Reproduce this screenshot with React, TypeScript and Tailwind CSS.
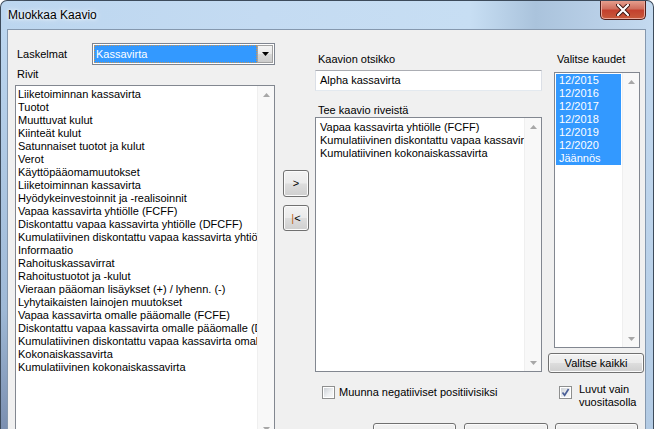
import React from "react";

const rows = [
  "Liiketoiminnan kassavirta",
  "Tuotot",
  "Muuttuvat kulut",
  "Kiinteät kulut",
  "Satunnaiset tuotot ja kulut",
  "Verot",
  "Käyttöpääomamuutokset",
  "Liiketoiminnan kassavirta",
  "Hyödykeinvestoinnit ja -realisoinnit",
  "Vapaa kassavirta yhtiölle (FCFF)",
  "Diskontattu vapaa kassavirta yhtiölle (DFCFF)",
  "Kumulatiivinen diskontattu vapaa kassavirta yhtiölle (DFCFF)",
  "Informaatio",
  "Rahoituskassavirrat",
  "Rahoitustuotot ja -kulut",
  "Vieraan pääoman lisäykset (+) / lyhenn. (-)",
  "Lyhytaikaisten lainojen muutokset",
  "Vapaa kassavirta omalle pääomalle (FCFE)",
  "Diskontattu vapaa kassavirta omalle pääomalle (DFCFE)",
  "Kumulatiivinen diskontattu vapaa kassavirta omalle pääomalle (DFCFE)",
  "Kokonaiskassavirta",
  "Kumulatiivinen kokonaiskassavirta",
];

const chartRows = [
  "Vapaa kassavirta yhtiölle (FCFF)",
  "Kumulatiivinen diskontattu vapaa kassavirta yhtiölle (DFCFF)",
  "Kumulatiivinen kokonaiskassavirta",
];

const periods = ["12/2015", "12/2016", "12/2017", "12/2018", "12/2019", "12/2020", "Jäännös"];

function VScroll() {
  return (
    <div className="w-[17px] self-stretch bg-[#f8f8f8] border-l border-[#efefef] flex flex-col justify-between shrink-0">
      <div className="h-[17px] flex items-center justify-center">
        <svg width="7" height="4" viewBox="0 0 7 4">
          <path d="M0 4 L3.5 0 L7 4 Z" fill="#a7a7a7" />
        </svg>
      </div>
      <div className="h-[17px] flex items-center justify-center">
        <svg width="7" height="4" viewBox="0 0 7 4">
          <path d="M0 0 L3.5 4 L7 0 Z" fill="#a7a7a7" />
        </svg>
      </div>
    </div>
  );
}

const btn =
  "border border-[#707070] rounded-[3px] bg-[linear-gradient(180deg,#f2f2f2_0%,#ebebeb_48%,#dddddd_52%,#cfcfcf_100%)] shadow-[inset_0_0_0_1px_#fbfbfb] flex items-center justify-center text-black";

function CheckBox({ checked }: { checked?: boolean }) {
  return (
    <div className="w-[13px] h-[13px] border border-[#8e8f8f] bg-white p-[1px] shrink-0">
      <div className="w-full h-full bg-[linear-gradient(135deg,#cdd1d6_0%,#eef0f2_60%,#f7f7f7_100%)] relative">
        {checked && (
          <svg className="absolute left-0 top-0" width="9" height="9" viewBox="0 0 9 9">
            <path d="M1.5 4.5 L3.6 7.2 L7.6 1" stroke="#4a5f97" strokeWidth="1.7" fill="none" />
          </svg>
        )}
      </div>
    </div>
  );
}

export default function App() {
  return (
    <div className="w-[654px] h-[429px] overflow-hidden flex flex-col font-['Liberation_Sans',Arial,sans-serif] text-[11px] text-black bg-[linear-gradient(90deg,#bcd6ef_0%,#c4dbf2_40%,#c7def3_72%,#aac3dc_82%,#b6cde5_90%,#c4daf0_100%)] rounded-t-[7px] border border-b-0 border-[#3d4b5b]">
      {/* title bar */}
      <div className="h-[28px] flex items-start shrink-0">
        <div className="pl-[7px] pt-[7px] text-[12px] leading-[15px] [text-shadow:0_0_6px_#ffffff,0_0_3px_#ffffff]">
          Muokkaa Kaavio
        </div>
        <div className="ml-auto mr-[7px] w-[46px] h-[20px] -mt-px rounded-b-[5px] border border-t-0 border-[#4f1e1a] bg-[linear-gradient(180deg,#e8a493_0%,#d0705f_45%,#c4412e_55%,#c85a3c_100%)] shadow-[inset_0_0_0_1px_#eaa79a] flex items-center justify-center">
          <svg width="14" height="12" viewBox="0 0 14 12">
            <path d="M2 1 L12 11 M12 1 L2 11" stroke="#3b1410" strokeWidth="4" strokeLinecap="round" />
            <path d="M2 1 L12 11 M12 1 L2 11" stroke="#ffffff" strokeWidth="2.2" strokeLinecap="round" />
          </svg>
        </div>
      </div>

      {/* body */}
      <div className="flex flex-1 min-h-0">
        <div className="w-[6px] shrink-0 bg-[linear-gradient(180deg,#bcd6ef_0%,#9fb9d6_70%,#7b8fb0_100%)]" />
        <div className="flex-1 bg-[#f0f0f0] border border-b-0 border-[#8598ae] flex pl-[7px] min-h-0">
          {/* left column */}
          <div className="w-[260px] flex flex-col shrink-0">
            <div className="mt-[13px] h-[22px] flex items-center">
              <span className="pl-[2px] leading-[14px]">Laskelmat</span>
              <div className="ml-auto w-[183px] h-[22px] border border-[#7f8590] bg-white flex p-[1px]">
                <div className="flex-1 bg-[#3399ff] text-white leading-[16px] pl-[1px] border border-dotted border-[#c79356]">
                  Kassavirta
                </div>
                <div className="w-[16px] border border-[#a2a2a2] bg-[linear-gradient(180deg,#f4f4f4_0%,#e8e8e8_50%,#d8d8d8_51%,#cccccc_100%)] flex items-center justify-center">
                  <svg width="7" height="4" viewBox="0 0 7 4">
                    <path d="M0 0 L3.5 4 L7 0 Z" fill="#000" />
                  </svg>
                </div>
              </div>
            </div>
            <div className="mt-[2px] leading-[14px] pl-[2px]">Rivit</div>
            <div className="mt-[4px] h-[353px] border border-[#828790] bg-white flex shrink-0">
              <div className="flex-1 overflow-hidden pl-[2px] pt-[2px] leading-[13px] whitespace-nowrap">
                {rows.map((r, i) => (
                  <div key={i}>{r}</div>
                ))}
              </div>
              <VScroll />
            </div>
          </div>

          {/* move buttons */}
          <div className="ml-[8px] w-[26px] flex flex-col shrink-0">
            <div className={`mt-[140px] h-[27px] ${btn} border-[#3c7fb1] shadow-[inset_0_0_0_1px_#a6dcf7]`}>&gt;</div>
            <div className={`mt-[8px] h-[26px] ${btn}`}>
              <span className="text-[#c0661c]">|</span>&lt;
            </div>
          </div>

          {/* right region */}
          <div className="ml-[6px] w-[329px] flex flex-col shrink-0">
            <div className="flex">
              <div className="w-[227px] flex flex-col">
                <div className="mt-[22px] leading-[14px] pl-[3px]">Kaavion otsikko</div>
                <div className="mt-[4px] h-[21px] border border-[#abadb3] border-b-[#e3e9ef] border-x-[#dbdfe6] bg-white pl-[4px] leading-[19px]">
                  Alpha kassavirta
                </div>
                <div className="mt-[12px] leading-[14px] pl-[3px]">Tee kaavio riveistä</div>
                <div className="h-[255px] border border-[#828790] bg-white flex">
                  <div className="flex-1 overflow-hidden pl-[4px] pt-[3px] leading-[13px] whitespace-nowrap">
                    {chartRows.map((r, i) => (
                      <div key={i}>{r}</div>
                    ))}
                  </div>
                  <VScroll />
                </div>
              </div>
              <div className="ml-[6px] w-[96px] flex flex-col">
                <div className="mt-[22px] leading-[14px] pl-[9px]">Valitse kaudet</div>
                <div className="ml-[6px] w-[86px] mt-[6px] h-[276px] border border-[#828790] bg-white flex">
                  <div className="flex-1 overflow-hidden pl-[1px] pt-[1px] pr-[1px] leading-[13px] whitespace-nowrap">
                    {periods.map((p) => (
                      <div key={p} className="bg-[#3399ff] text-white pl-[3px] h-[13px]">
                        {p}
                      </div>
                    ))}
                  </div>
                  <VScroll />
                </div>
                <div className={`mt-[5px] h-[20px] w-[96px] ${btn}`}>Valitse kaikki</div>
              </div>
            </div>

            {/* checkboxes */}
            <div className="mt-[10px] flex h-[26px]">
              <div className="w-[233px] pl-[7px] mt-[3px] flex items-start gap-[4px]">
                <CheckBox />
                <span className="leading-[13px]">Muunna negatiiviset positiivisiksi</span>
              </div>
              <div className="pl-[11px] flex items-start gap-[7px]">
                <div className="mt-[3px]">
                  <CheckBox checked />
                </div>
                <div className="leading-[13px]">
                  Luvut vain
                  <br />
                  vuositasolla
                </div>
              </div>
            </div>

            {/* bottom buttons */}
            <div className="mt-[14px] flex justify-end pr-[6px]">
              <div className={`w-[83px] h-[23px] ${btn}`}>Päivitä</div>
              <div className={`ml-[8px] w-[84px] h-[23px] ${btn}`}>Poista</div>
              <div className={`ml-[7px] w-[83px] h-[23px] ${btn}`}>Peruuta</div>
            </div>
          </div>
        </div>
        <div className="w-[7px] shrink-0 bg-[linear-gradient(180deg,#c4daf0_0%,#b3cbe4_100%)]" />
      </div>
    </div>
  );
}
